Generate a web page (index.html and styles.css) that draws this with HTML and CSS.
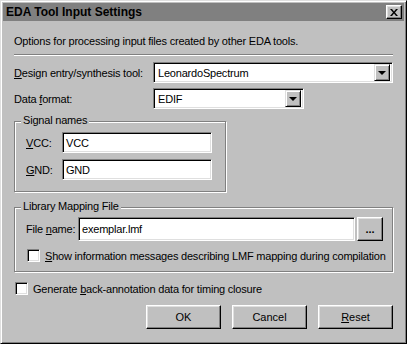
FILE: index.html
```html
<!DOCTYPE html>
<html>
<head>
    <title>EDA Tool Input Settings</title>
    <meta charset="UTF-8">
    <link rel="stylesheet" href="styles.css">
</head>
<body>
    <div class="window">
        <div class="titlebar">
            <span class="title">EDA Tool Input Settings</span>
            <button class="close">
                <svg width="8" height="7" viewBox="0 0 8 7">
                    <path d="M0 0h2l2 2.5L6 0h2L5 3.5 8 7H6L4 4.5 2 7H0l3-3.5z" fill="#000"/>
                </svg>
            </button>
        </div>
        <div class="content">
            <div class="intro">Options for processing input files created by other EDA tools.</div>
            <div class="sep"></div>

            <div class="row row-tool">
                <label class="lbl lbl-wide"><u>D</u>esign entry/synthesis tool:</label>
                <div class="combo combo-wide">
                    <span class="combo-text">LeonardoSpectrum</span>
                    <span class="arrow"><span class="tri"></span></span>
                </div>
            </div>
            <div class="row row-format">
                <label class="lbl lbl-wide">Data <u>f</u>ormat:</label>
                <div class="combo combo-short">
                    <span class="combo-text">EDIF</span>
                    <span class="arrow"><span class="tri"></span></span>
                </div>
            </div>

            <div class="group group-signal">
                <span class="legend">Signal names</span>
                <div class="row">
                    <label class="lbl lbl-sig"><u>V</u>CC:</label>
                    <div class="field field-sig">VCC</div>
                </div>
                <div class="row row-gnd">
                    <label class="lbl lbl-sig"><u>G</u>ND:</label>
                    <div class="field field-sig">GND</div>
                </div>
            </div>

            <div class="group group-lib">
                <span class="legend">Library Mapping File</span>
                <div class="row row-file">
                    <label class="lbl lbl-file">File <u>n</u>ame:</label>
                    <div class="field field-file">exemplar.lmf</div>
                    <button class="btn btn-browse">...</button>
                </div>
                <div class="check-row check-lmf">
                    <span class="box"></span>
                    <span><u>S</u>how information messages describing LMF mapping during compilation</span>
                </div>
            </div>

            <div class="check-row check-back">
                <span class="box"></span>
                <span>Generate <u>b</u>ack-annotation data for timing closure</span>
            </div>

            <div class="buttons">
                <button class="btn btn-main">OK</button>
                <button class="btn btn-main">Cancel</button>
                <button class="btn btn-main"><u>R</u>eset</button>
            </div>
        </div>
    </div>
</body>
</html>
```

FILE: styles.css
```css
body {
    margin: 0;
    background: #c0c0c0;
    font-family: "Liberation Sans", Arial, sans-serif;
    font-size: 11px;
    letter-spacing: -0.2px;
    color: #000;
    white-space: nowrap;
}
.window {
    width: 407px;
    height: 344px;
    box-sizing: border-box;
    background: #c0c0c0;
    border: 1px solid;
    border-color: #dfdfdf #000 #000 #dfdfdf;
    box-shadow: inset 1px 1px 0 #fff, inset -1px -1px 0 #808080;
    padding: 2px;
    overflow: hidden;
}
.titlebar {
    height: 18px;
    background: #808080;
    display: flex;
    align-items: center;
    justify-content: space-between;
    padding: 0 2px 0 3px;
}
.title {
    font-weight: 700;
    font-size: 12px;
    letter-spacing: 0;
}
.close {
    width: 16px;
    height: 14px;
    padding: 0;
    background: #c0c0c0;
    border: 1px solid;
    border-color: #fff #000 #000 #fff;
    box-shadow: inset -1px -1px 0 #808080, inset 1px 1px 0 #dfdfdf;
    display: flex;
    align-items: center;
    justify-content: center;
}
.content {
    padding: 0 11px;
}
.intro {
    margin-top: 13px;
    line-height: 14px;
}
.sep {
    margin-top: 6px;
    border-top: 1px solid #808080;
    border-bottom: 1px solid #fff;
}
.row {
    display: flex;
    align-items: center;
}
.lbl {
    flex-shrink: 0;
}
.row-tool {
    margin-top: 6px;
}
.row-format {
    margin-top: 5px;
}
.lbl-wide {
    width: 139px;
}
.combo {
    height: 21px;
    box-sizing: border-box;
    background: #fff;
    border: 1px solid;
    border-color: #808080 #fff #fff #808080;
    box-shadow: inset 1px 1px 0 #000, inset -1px -1px 0 #dfdfdf;
    display: flex;
    align-items: center;
    padding: 2px 2px 2px 4px;
}
.combo-wide {
    width: 240px;
}
.combo-short {
    width: 151px;
}
.combo-text {
    flex: 1;
}
.arrow {
    width: 16px;
    height: 17px;
    box-sizing: border-box;
    background: #c0c0c0;
    border: 1px solid;
    border-color: #dfdfdf #000 #000 #dfdfdf;
    box-shadow: inset 1px 1px 0 #fff, inset -1px -1px 0 #808080;
    display: flex;
    align-items: center;
    justify-content: center;
}
.tri {
    width: 0;
    height: 0;
    border-left: 4px solid transparent;
    border-right: 4px solid transparent;
    border-top: 4px solid #000;
}
.group {
    position: relative;
    box-sizing: border-box;
    border: 1px solid #808080;
    box-shadow: inset 1px 1px 0 #fff, 1px 1px 0 #fff;
}
.legend {
    position: absolute;
    top: -8px;
    left: 6px;
    padding: 0 2px;
    background: #c0c0c0;
}
.group-signal {
    margin-top: 12px;
    width: 212px;
    padding: 10px 0 11px 11px;
}
.lbl-sig {
    width: 36px;
}
.field {
    height: 21px;
    box-sizing: border-box;
    background: #fff;
    border: 1px solid;
    border-color: #808080 #fff #fff #808080;
    box-shadow: inset 1px 1px 0 #000, inset -1px -1px 0 #dfdfdf;
    padding: 3px 3px;
    line-height: 14px;
}
.field-sig {
    width: 150px;
}
.row-gnd {
    margin-top: 6px;
}
.group-lib {
    margin-top: 15px;
    width: 379px;
    padding: 9px 9px 9px 11px;
}
.lbl-file {
    width: 52px;
}
.field-file {
    flex: 1;
    height: 24px;
    padding-top: 4px;
}
.btn {
    background: #c0c0c0;
    border: 1px solid;
    border-color: #fff #000 #000 #fff;
    box-shadow: inset -1px -1px 0 #808080, inset 1px 1px 0 #dfdfdf;
    font-family: "Liberation Sans", Arial, sans-serif;
    font-size: 11px;
    color: #000;
    padding: 0;
}
.btn-browse {
    width: 26px;
    height: 24px;
    margin-left: 2px;
    font-weight: 700;
}
.check-row {
    display: flex;
    align-items: center;
}
.box {
    width: 13px;
    height: 13px;
    box-sizing: border-box;
    background: #fff;
    border: 1px solid;
    border-color: #808080 #fff #fff #808080;
    box-shadow: inset 1px 1px 0 #000, inset -1px -1px 0 #dfdfdf;
    margin-right: 5px;
    flex-shrink: 0;
}
.check-lmf {
    margin-top: 8px;
    padding-left: 1px;
}
.check-back {
    margin-top: 10px;
    padding-left: 1px;
}
.buttons {
    margin-top: 10px;
    display: flex;
    justify-content: flex-end;
    gap: 11px;
}
.btn-main {
    width: 75px;
    height: 24px;
}
```
